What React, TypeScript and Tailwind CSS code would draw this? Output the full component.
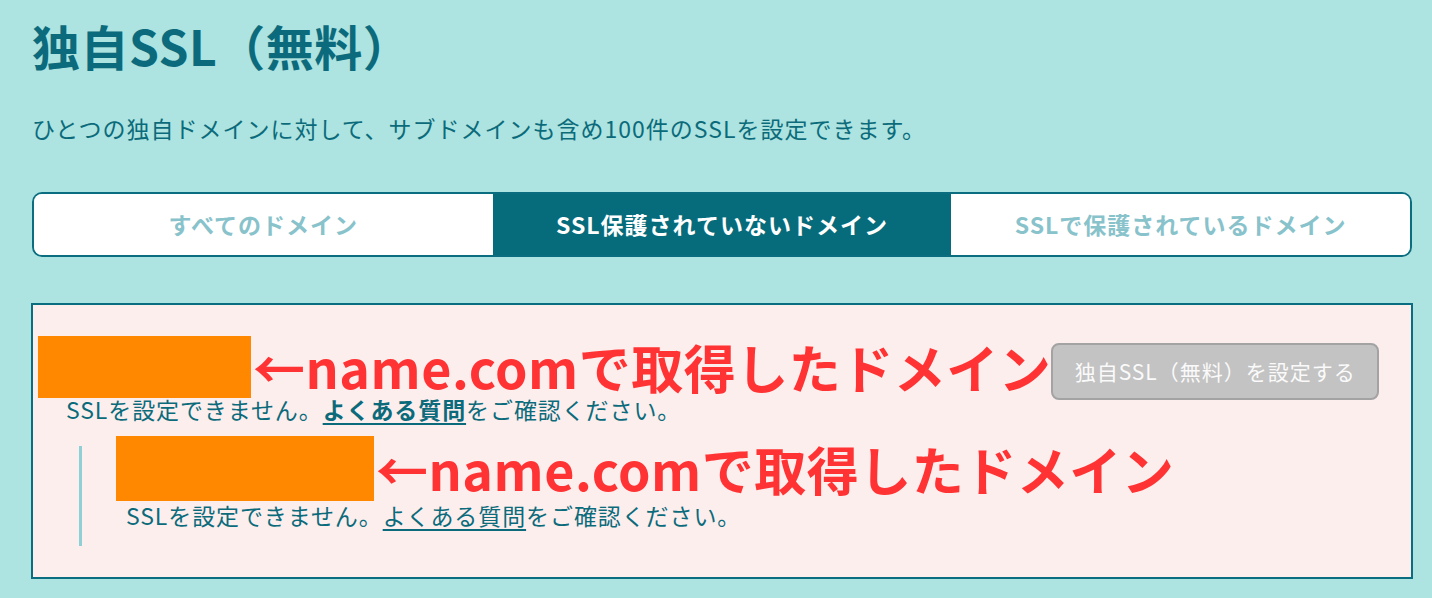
const tabs = [
  { label: 'すべてのドメイン', active: false },
  { label: 'SSL保護されていないドメイン', active: true },
  { label: 'SSLで保護されているドメイン', active: false },
]

function Notice({ boldLink }: { boldLink: boolean }) {
  return (
    <p className="whitespace-nowrap text-[23px] leading-[28px] tracking-[0.9px] text-[#0b6b7b]">
      SSLを設定できません。
      <a href="#" className={boldLink ? 'font-bold underline underline-offset-4' : 'underline underline-offset-4'}>
        よくある質問
      </a>
      をご確認ください。
    </p>
  )
}

export default function App() {
  return (
    <div className="w-[1432px] h-[598px] overflow-hidden bg-[#ade3e0] px-[32px] pt-[12px] text-[#0b6b7b] [font-family:'Noto_Sans_CJK_JP','Noto_Sans',sans-serif]">
      {/* Heading */}
      <h1 className="text-[48px] font-bold leading-[66px] tracking-[0.5px] text-[#0b6b7c]">独自SSL（無料）</h1>
      <p className="mt-[34px] text-[23px] leading-[32px] tracking-[1px]">
        ひとつの独自ドメインに対して、サブドメインも含め100件のSSLを設定できます。
      </p>

      {/* Tabs */}
      <div className="mt-[48px] flex h-[65px] w-[1380px] overflow-hidden rounded-[10px] border-2 border-[#0b6e80]">
        {tabs.map(t => (
          <div
            key={t.label}
            className={
              t.active
                ? 'flex flex-1 items-center justify-center bg-[#066c7c] text-[23px] font-bold tracking-[1px] text-white'
                : 'flex flex-1 items-center justify-center bg-white text-[23px] font-bold tracking-[1px] text-[#88c2cb]'
            }
          >
            {t.label}
          </div>
        ))}
      </div>

      {/* Domain list */}
      <div className="mt-[46px] h-[276px] w-[1382px] -ml-px border-2 border-[#0b6e80] bg-[#fdeeee] pl-[5px] pr-[32px] pt-[31px]">
        <div className="flex items-start">
          <div className="h-[62px] w-[213px] shrink-0 bg-[#ff8800]" />
          <span className="ml-[2px] mt-[4px] whitespace-nowrap text-[52px] font-bold leading-[54px] tracking-[0.5px] text-[#ff3333]">
            ←name.comで取得したドメイン
          </span>
          <button className="ml-auto mt-[7px] h-[57px] w-[328px] shrink-0 rounded-[8px] border-2 border-[#a3a3a3] bg-[#c3c3c3] text-[21px] tracking-[1px] text-[#fafafa]">
            独自SSL（無料）を設定する
          </button>
        </div>
        <div className="ml-[28px] -mt-[5px]">
          <Notice boldLink />
        </div>

        <div className="ml-[41px] mt-[23px] flow-root h-[100px] border-l-[3px] border-[#8fd0d6]">
          <div className="-mt-[10px] pl-[34px]">
            <div className="flex items-start">
              <div className="h-[65px] w-[258px] shrink-0 bg-[#ff8800]" />
              <span className="ml-[2px] mt-[6px] whitespace-nowrap text-[52px] font-bold leading-[54px] tracking-[0.5px] text-[#ff3333]">
                ←name.comで取得したドメイン
              </span>
            </div>
            <div className="ml-[10px]">
              <Notice boldLink={false} />
            </div>
          </div>
        </div>
      </div>
    </div>
  )
}
